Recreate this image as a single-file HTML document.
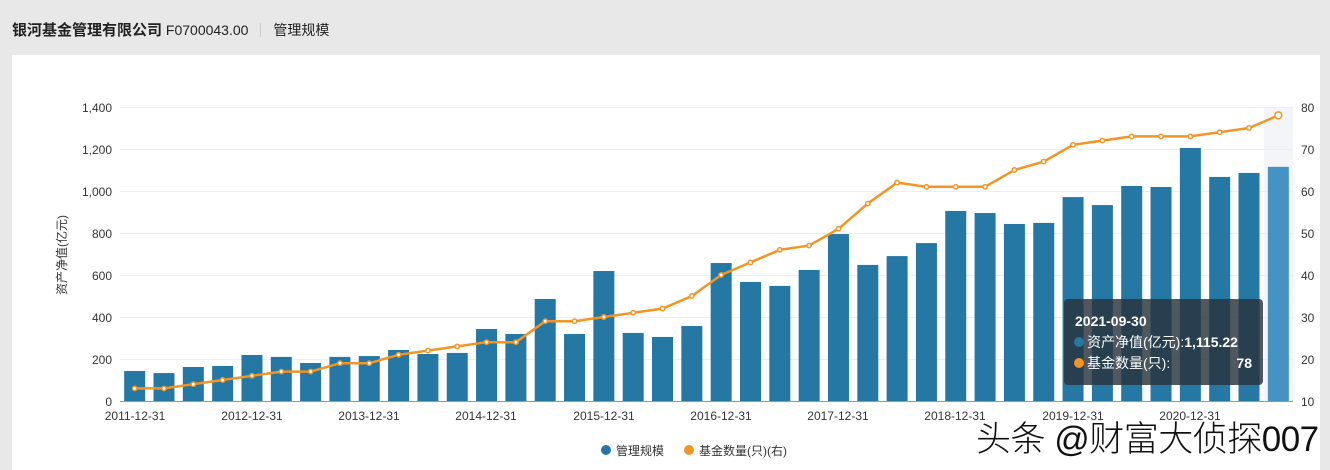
<!DOCTYPE html>
<html><head><meta charset="utf-8"><style>
body{margin:0;width:1330px;height:470px;background:#e8e8e8;font-family:"Liberation Sans","Noto Sans CJK SC",sans-serif;overflow:hidden;position:relative}
.hd{position:absolute;left:12px;top:19px;font-size:14px;color:#222;white-space:nowrap}
.hd b{font-size:15px}
.hd .sep{display:inline-block;width:1px;height:14px;background:#ccc;margin:0 12px;vertical-align:-2px}
.panel{position:absolute;left:12px;top:55px;width:1308px;height:415px;background:#fff}
svg{position:absolute;left:0;top:0}
.wm{position:absolute;left:976px;top:420px;font-size:35px;line-height:40px;color:#111;font-family:"Liberation Sans","Noto Sans CJK SC",sans-serif;font-weight:300;text-shadow:1px 1px 1px #fff,-1px -1px 1px #fff;white-space:nowrap;letter-spacing:-0.5px}
</style></head><body>
<div class="hd"><b>银河基金管理有限公司</b> F0700043.00<span class="sep"></span>管理规模</div>
<div class="panel"></div>
<svg width="1330" height="470" id="s" font-family="Liberation Sans,Noto Sans CJK SC,sans-serif" font-size="12" fill="#333">
<rect x="1264" y="107" width="29" height="294" fill="#f3f5f9"/>
<g stroke="#eee" stroke-width="1">
<line x1="120" x2="1293" y1="107.5" y2="107.5"/><line x1="120" x2="1293" y1="149.5" y2="149.5"/><line x1="120" x2="1293" y1="191.5" y2="191.5"/><line x1="120" x2="1293" y1="233.5" y2="233.5"/><line x1="120" x2="1293" y1="275.5" y2="275.5"/><line x1="120" x2="1293" y1="317.5" y2="317.5"/><line x1="120" x2="1293" y1="359.5" y2="359.5"/>
</g>
<g text-anchor="end">
<text x="112" y="112">1,400</text><text x="112" y="154">1,200</text><text x="112" y="196">1,000</text><text x="112" y="238">800</text><text x="112" y="280">600</text><text x="112" y="322">400</text><text x="112" y="364">200</text><text x="112" y="406">0</text>
</g>
<g>
<text x="1301" y="112">80</text><text x="1301" y="154">70</text><text x="1301" y="196">60</text><text x="1301" y="238">50</text><text x="1301" y="280">40</text><text x="1301" y="322">30</text><text x="1301" y="364">20</text><text x="1301" y="406">10</text>
</g>
<text transform="translate(66,255) rotate(-90)" text-anchor="middle">资产净值(亿元)</text>
<g id="bars"></g>
<line x1="120" x2="1293" y1="401.5" y2="401.5" stroke="#999"/>
<g text-anchor="middle">
<text x="135" y="420">2011-12-31</text><text x="252" y="420">2012-12-31</text><text x="369" y="420">2013-12-31</text><text x="486" y="420">2014-12-31</text><text x="604" y="420">2015-12-31</text><text x="721" y="420">2016-12-31</text><text x="838" y="420">2017-12-31</text><text x="955" y="420">2018-12-31</text><text x="1073" y="420">2019-12-31</text><text x="1190" y="420">2020-12-31</text>
</g>
<g id="line"></g>
<rect x="1064" y="299" width="199" height="86" rx="4" fill="rgba(40,50,60,0.82)"/>
<text x="1075" y="326" fill="#fff" font-size="14" font-weight="bold">2021-09-30</text>
<circle cx="1079" cy="342" r="5" fill="#2478a3"/>
<text x="1087" y="347" fill="#fff" font-size="14">资产净值(亿元):<tspan font-weight="bold">1,115.22</tspan></text>
<circle cx="1079" cy="363" r="5" fill="#f39423"/>
<text x="1087" y="368" fill="#fff" font-size="14">基金数量(只):</text>
<text x="1252" y="368" fill="#fff" font-size="14" font-weight="bold" text-anchor="end">78</text>
<circle cx="606" cy="450" r="5" fill="#2478a3"/><text x="616" y="455">管理规模</text>
<circle cx="689" cy="450" r="5" fill="#f39423"/><text x="699" y="455">基金数量(只)(右)</text>
</svg>
<div class="wm">头条 @财富大侦探007</div>
<script>
var b=[143,133,162,167,219,210,181,210,214,243,224,229,343,319,486,319,619,324,305,357,657,567,548,624,795,648,690,752,905,895,843,848,971,933,1024,1019,1205,1067,1086,1115];
var l=[13,13,14,15,16,17,17,19,19,21,22,23,24,24,29,29,30,31,32,35,40,43,46,47,51,57,62,61,61,61,65,67,71,72,73,73,73,74,75,78];
var ns="http://www.w3.org/2000/svg",g=document.getElementById('bars'),lg=document.getElementById('line'),pts=[];
for(var i=0;i<40;i++){var cx=120+29.325*(i+0.5);var h=b[i]*0.21;var r=document.createElementNS(ns,'rect');
r.setAttribute('x',cx-10.5);r.setAttribute('y',401-h);r.setAttribute('width',21);r.setAttribute('height',h);r.setAttribute('fill',i==39?'#4493c3':'#2478a3');g.appendChild(r);
pts.push([cx,401-(l[i]-10)*4.2]);}
var p=document.createElementNS(ns,'polyline');p.setAttribute('points',pts.map(function(a){return a.join(',')}).join(' '));p.setAttribute('fill','none');p.setAttribute('stroke','#f39423');p.setAttribute('stroke-width','2.5');lg.appendChild(p);
pts.forEach(function(a,i){var c=document.createElementNS(ns,'circle');c.setAttribute('cx',a[0]);c.setAttribute('cy',a[1]);c.setAttribute('r',i==39?3.5:2.2);c.setAttribute('fill','#fff');c.setAttribute('stroke','#f39423');c.setAttribute('stroke-width','1.5');lg.appendChild(c);});
</script>
</body></html>
